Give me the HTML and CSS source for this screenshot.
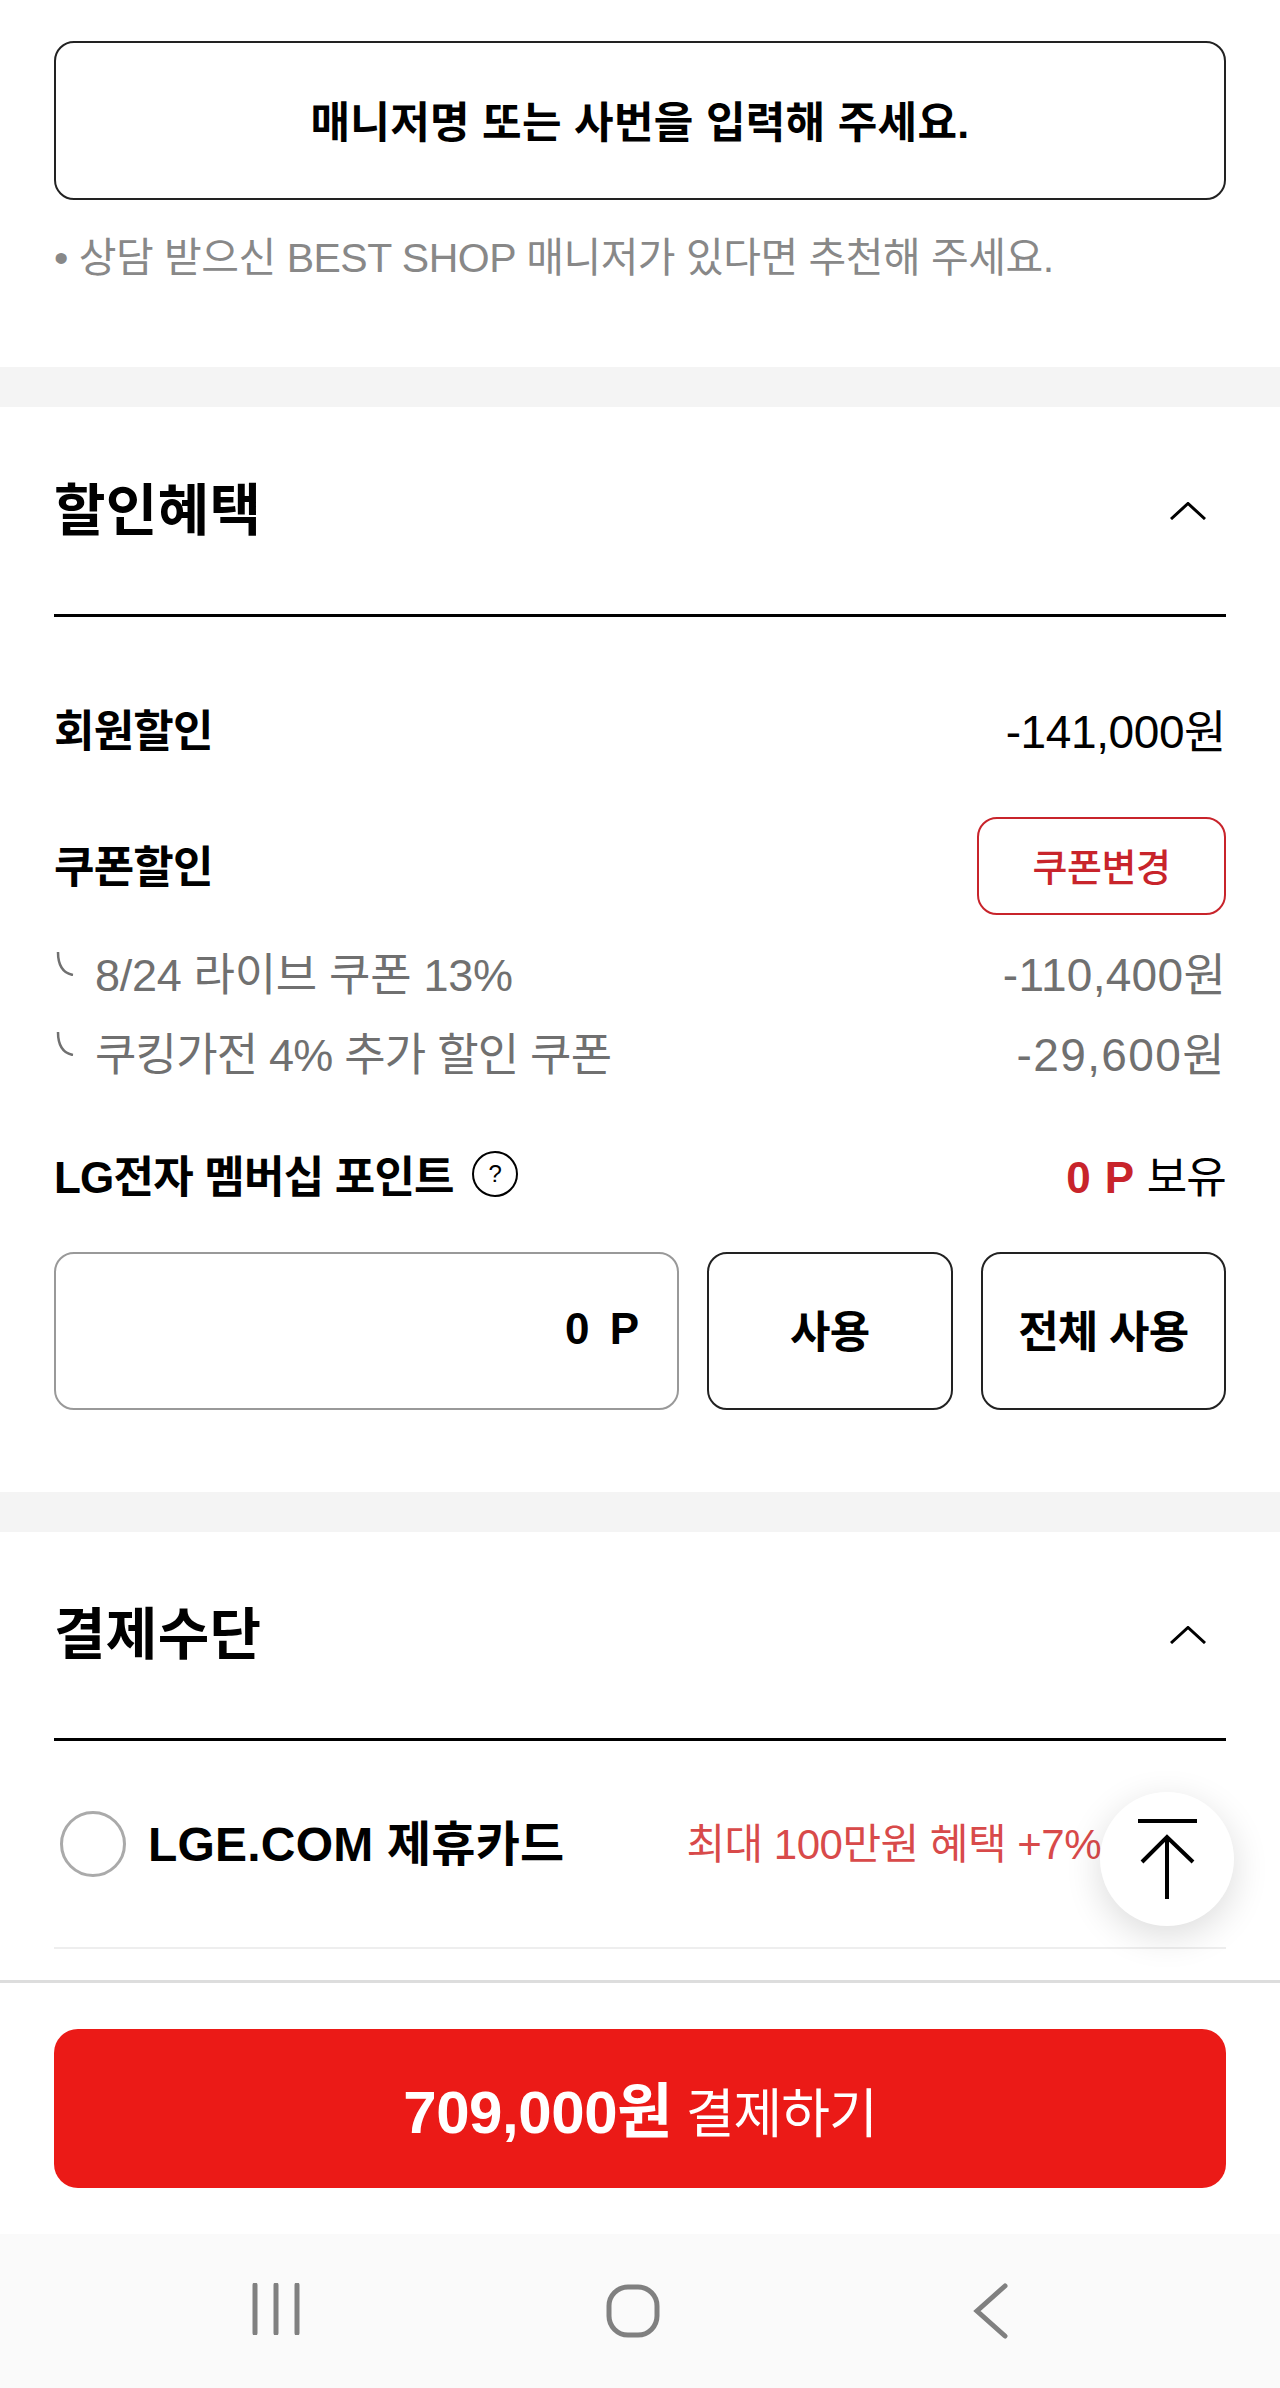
FILE: index.html
```html
<!DOCTYPE html>
<html lang="ko">
<head>
  <meta charset="utf-8">
  <title>결제</title>
  <link rel="stylesheet" href="styles.css">
</head>
<body>
  <div class="page">
    <div class="content">
      <section class="manager">
        <div class="manager-box">매니저명 또는 사번을 입력해 주세요.</div>
        <p class="manager-note">• 상담 받으신 BEST SHOP 매니저가 있다면 추천해 주세요.</p>
      </section>

      <section class="panel discount">
        <div class="panel-head">
          <h2>할인혜택</h2>
          <svg class="chevron" width="36" height="18" viewBox="0 0 36 18"><path d="M1 17 18 1.5 35 17"/></svg>
        </div>
        <div class="row row-member">
          <span class="label">회원할인</span>
          <span class="price">-141,000원</span>
        </div>
        <div class="row row-coupon">
          <span class="label">쿠폰할인</span>
          <button class="coupon-btn">쿠폰변경</button>
        </div>
        <div class="row sub-row sub-first">
          <span class="sub-label">
            <svg class="elbow" width="18" height="24" viewBox="0 0 18 24"><path d="M2 0C2 12 6 21 17 23"/></svg>
            8/24 라이브 쿠폰 13%
          </span>
          <span class="sub-price">-110,400원</span>
        </div>
        <div class="row sub-row sub-second">
          <span class="sub-label">
            <svg class="elbow" width="18" height="24" viewBox="0 0 18 24"><path d="M2 0C2 12 6 21 17 23"/></svg>
            쿠킹가전 4% 추가 할인 쿠폰
          </span>
          <span class="sub-price">-29,600원</span>
        </div>
        <div class="row row-point">
          <span class="label point-label">
            LG전자 멤버십 포인트
            <span class="help">?</span>
          </span>
          <span class="point-have"><b>0 P</b> 보유</span>
        </div>
        <div class="point-form">
          <div class="point-input">0 P</div>
          <button class="point-btn">사용</button>
          <button class="point-btn">전체 사용</button>
        </div>
      </section>

      <section class="panel payment">
        <div class="panel-head">
          <h2>결제수단</h2>
          <svg class="chevron" width="36" height="18" viewBox="0 0 36 18"><path d="M1 17 18 1.5 35 17"/></svg>
        </div>
        <div class="card-row">
          <span class="radio"></span>
          <span class="card-name">LGE.COM 제휴카드</span>
          <span class="card-benefit">최대 100만원 혜택 +7%</span>
        </div>
      </section>

      <button class="to-top">
        <svg width="60" height="80" viewBox="0 0 60 80"><path d="M1 2H60M5 43 30 18 56 43M30 18V80"/></svg>
      </button>
    </div>

    <footer class="pay-bar">
      <button class="pay-btn"><b>709,000원</b> 결제하기</button>
    </footer>

    <nav class="sys-nav">
      <svg width="50" height="52" viewBox="0 0 50 52"><path d="M3 2V50M24 2V50M45 2V50"/></svg>
      <svg width="56" height="56" viewBox="0 0 56 56"><rect x="4" y="4" width="48" height="48" rx="19"/></svg>
      <svg class="nav-back" width="36" height="56" viewBox="0 0 36 56"><path d="M33 3 5 28 33 53"/></svg>
    </nav>
  </div>
</body>
</html>
```

FILE: styles.css
```css
* {
  box-sizing: border-box;
}

html, body {
  margin: 0;
  padding: 0;
}

body {
  font-family: "Liberation Sans", "Noto Sans CJK KR", sans-serif;
  color: #000;
  background: #fff;
}

.page {
  width: 1280px;
  height: 2388px;
  display: flex;
  flex-direction: column;
  overflow: hidden;
}

.content {
  position: relative;
  height: 1980px;
  background: #fff;
}

button {
  font-family: inherit;
  background: #fff;
  cursor: pointer;
}

/* manager */
.manager {
  height: 367px;
  padding: 41px 54px 0;
}

.manager-box {
  height: 159px;
  border: 2px solid #222;
  border-radius: 20px;
  padding-bottom: 4px;
  display: flex;
  align-items: center;
  justify-content: center;
  font-size: 43px;
  font-weight: 700;
  letter-spacing: 0.3px;
}

.manager-note {
  margin: 32px 0 0;
  font-size: 41px;
  line-height: 52px;
  color: #888;
  letter-spacing: -0.5px;
}

/* panels */
.panel {
  border-top: 40px solid #f4f4f4;
  padding: 0 54px;
}

.panel-head {
  height: 210px;
  border-bottom: 3px solid #000;
  display: flex;
  align-items: center;
  justify-content: space-between;
  padding: 0 20px 0 0;
}

.panel-head h2 {
  margin: 0;
  font-size: 56px;
  font-weight: 700;
  letter-spacing: 0.3px;
  line-height: 72px;
}

.chevron {
  fill: none;
  stroke: #000;
  stroke-width: 3;
}

.row {
  display: flex;
  align-items: center;
  justify-content: space-between;
  font-size: 44px;
}

.label {
  font-size: 44px;
  font-weight: 700;
  letter-spacing: -0.8px;
}

.price {
  font-size: 46px;
  letter-spacing: -0.4px;
}

.row-member {
  height: 100px;
  margin-top: 61px;
}

.row-coupon {
  height: 98px;
  margin-top: 39px;
}

.row-coupon .label {
  padding-bottom: 4px;
}

.coupon-btn {
  width: 249px;
  height: 98px;
  border: 2px solid #c8242b;
  border-radius: 20px;
  color: #c8242b;
  font-size: 38px;
  font-weight: 500;
  letter-spacing: -0.5px;
  padding: 0 0 3px;
}

.sub-row {
  height: 80px;
  color: #707070;
}

.sub-first {
  margin-top: 16px;
}

.sub-label {
  display: flex;
  align-items: center;
  gap: 21px;
  font-size: 45px;
  letter-spacing: -0.3px;
  white-space: nowrap;
}

.sub-price {
  font-size: 46px;
  letter-spacing: 0.3px;
}

.sub-second .sub-label {
  letter-spacing: -0.8px;
}

.sub-second .sub-price {
  letter-spacing: 1.4px;
}

.elbow {
  fill: none;
  stroke: #707070;
  stroke-width: 2.5;
  margin: -15px 0 0 2px;
}

.row-point {
  height: 64px;
  margin-top: 51px;
}

.point-label {
  display: flex;
  align-items: center;
  gap: 18px;
  letter-spacing: -0.8px;
}

.help {
  width: 46px;
  height: 46px;
  border: 2.5px solid #000;
  border-radius: 50%;
  display: flex;
  align-items: center;
  justify-content: center;
  font-size: 24px;
  font-weight: 400;
}

.point-have {
  letter-spacing: -0.8px;
}

.point-have b {
  color: #c8242b;
  letter-spacing: 1px;
}

.point-form {
  display: flex;
  margin-top: 46px;
  gap: 28px;
  height: 158px;
}

.point-input {
  width: 625px;
  border: 2px solid #999;
  border-radius: 20px;
  display: flex;
  align-items: center;
  justify-content: flex-end;
  padding: 0 38px 4px 0;
  font-size: 44px;
  font-weight: 700;
  word-spacing: 8px;
}

.point-btn {
  flex: 1;
  border: 2px solid #222;
  border-radius: 20px;
  color: #000;
  font-size: 44px;
  font-weight: 700;
  letter-spacing: -0.8px;
  padding: 0 0 4px;
}

.discount {
  height: 1125px;
}

/* payment */
.payment {
  height: 488px;
}

.payment .panel-head {
  height: 209px;
}

.card-row {
  height: 208px;
  border-bottom: 2px solid #eee;
  display: flex;
  align-items: center;
  padding-left: 6px;
}

.radio {
  width: 66px;
  height: 66px;
  border: 3px solid #aaa;
  border-radius: 50%;
  flex: none;
}

.card-name {
  margin-left: 22px;
  padding-bottom: 9px;
  font-size: 48px;
  font-weight: 700;
  letter-spacing: 0.2px;
}

.card-benefit {
  margin-left: 122px;
  padding-bottom: 8px;
  font-size: 42px;
  color: #d84a4a;
  letter-spacing: -0.5px;
  white-space: nowrap;
}

/* floating button sits over the list */
.to-top {
  position: absolute;
  left: 1100px;
  top: 1792px;
  width: 134px;
  height: 134px;
  border: none;
  border-radius: 50%;
  background: #fff;
  box-shadow: 0 10px 36px rgba(0, 0, 0, 0.14);
  padding: 0;
  display: flex;
  align-items: center;
  justify-content: center;
}

.to-top svg {
  fill: none;
  stroke: #000;
  stroke-width: 4;
}

/* bottom bar */
.pay-bar {
  height: 254px;
  border-top: 3px solid #ddd;
  padding: 46px 54px 0;
  background: #fff;
}

.pay-btn {
  width: 100%;
  height: 159px;
  border: none;
  border-radius: 24px;
  background: #eb1a17;
  color: #fff;
  font-size: 53px;
  font-weight: 400;
  letter-spacing: -1px;
  padding: 0 0 5px;
}

.pay-btn b {
  font-size: 60px;
  letter-spacing: -0.4px;
}

.sys-nav {
  height: 154px;
  background: #fafafa;
  display: flex;
  align-items: flex-start;
  padding: 49px 0 0 252px;
  gap: 303px;
}

.sys-nav svg {
  fill: none;
  stroke: #808080;
  stroke-width: 5;
  stroke-linecap: round;
}

.sys-nav .nav-back {
  margin-left: 8px;
}
```
